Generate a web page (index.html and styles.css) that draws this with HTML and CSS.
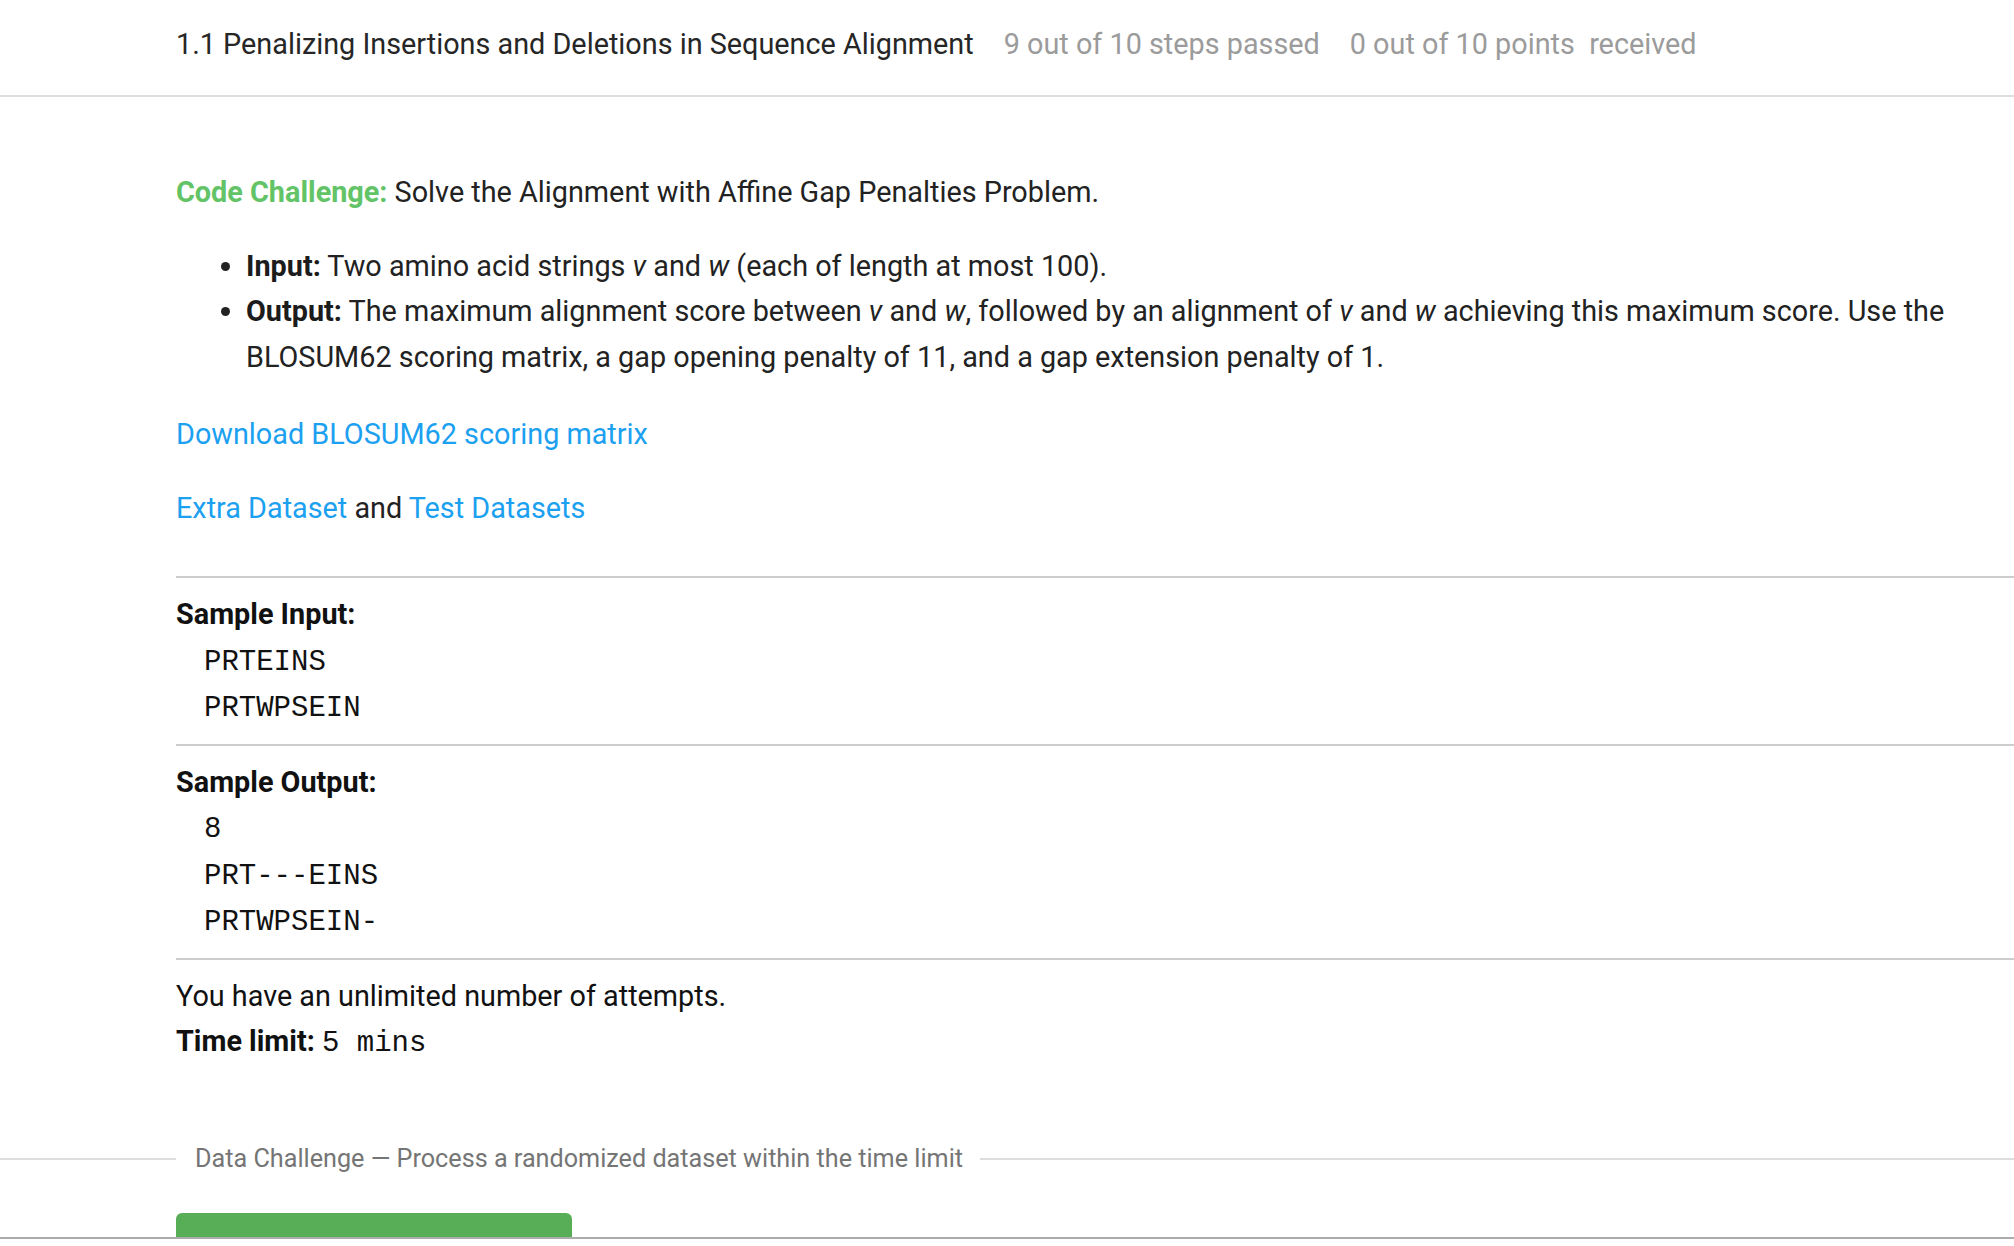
FILE: index.html
```html
<!DOCTYPE html>
<html lang="en">
<head>
<meta charset="utf-8">
<title>1.1 Penalizing Insertions and Deletions in Sequence Alignment</title>
<link rel="stylesheet" href="styles.css">
</head>
<body>
<header class="topbar">
  <span class="lesson-title">1.1 Penalizing Insertions and Deletions in Sequence Alignment</span>
  <span class="stat">9 out of 10 steps passed</span>
  <span class="stat">0 out of 10 points&nbsp; received</span>
</header>

<main class="step">
  <p class="lead"><strong class="cc">Code Challenge:</strong> Solve the Alignment with Affine Gap Penalties Problem.</p>
  <ul class="spec">
    <li><strong>Input:</strong> Two amino acid strings <em>v</em> and <em>w</em> (each of length at most 100).</li>
    <li><strong>Output:</strong> The maximum alignment score between <em>v</em> and <em>w</em>, followed by an alignment of <em>v</em> and <em>w</em> achieving this maximum score. Use the BLOSUM62 scoring matrix, a gap opening penalty of 11, and a gap extension penalty of 1.</li>
  </ul>
  <p class="link-line"><a href="#" class="link">Download BLOSUM62 scoring matrix</a></p>
  <p class="link-line last"><a href="#" class="link">Extra Dataset</a> and <a href="#" class="link">Test Datasets</a></p>

  <div class="samples">
    <section class="sample">
      <div class="sample-title">Sample Input:</div>
      <pre class="code">PRTEINS
PRTWPSEIN</pre>
    </section>
    <section class="sample">
      <div class="sample-title">Sample Output:</div>
      <pre class="code">8
PRT---EINS
PRTWPSEIN-</pre>
    </section>
    <section class="limits">
      <p>You have an unlimited number of attempts.</p>
      <p><strong>Time limit:</strong> <code class="mono">5 mins</code></p>
    </section>
  </div>
</main>

<div class="divider"><span class="divider-text">Data Challenge — Process a randomized dataset within the time limit</span></div>

<div class="actions">
  <button class="btn" type="button">Download dataset</button>
</div>

<div class="bottom-bar"></div>
</body>
</html>
```

FILE: styles.css
```css
html, body {
  margin: 0;
  padding: 0;
  background: #ffffff;
}

body {
  font-family: Roboto, "Liberation Sans", sans-serif;
  font-size: 28.8px;
  line-height: 45.5px;
  color: #222222;
  overflow: hidden;
}

.topbar {
  display: flex;
  align-items: baseline;
  gap: 30px;
  height: 74px;
  padding: 21px 0 0 176px;
  border-bottom: 2px solid #dedede;
  line-height: 46px;
  white-space: nowrap;
}

.lesson-title {
  color: #262626;
}

.stat {
  color: #9b9b9b;
}

.step {
  padding: 73px 0 0 176px;
}

.step p {
  margin: 0 0 28px;
}

.lead {
  color: #222222;
}

.cc {
  color: #62c466;
  font-weight: 700;
}

strong {
  font-weight: 700;
}

.spec {
  margin: 0 0 32px;
  padding-left: 70px;
}

.spec strong {
  color: #1c1c1c;
}

.link {
  color: #1ca0f0;
  text-decoration: none;
}

.step p.last {
  margin-bottom: 0;
}

.samples {
  margin-top: 45px;
}

.sample {
  border-top: 2px solid #cdcdcd;
  padding: 14px 0 11px;
}

.sample-title {
  font-weight: 700;
  color: #111111;
}

.code {
  margin: 0;
  padding: 2px 0 0 28px;
  font-family: "Liberation Mono", "DejaVu Sans Mono", monospace;
  font-size: 29px;
  line-height: 46.5px;
  color: #111111;
}

.limits {
  border-top: 2px solid #cdcdcd;
  padding-top: 14px;
}

.step .limits p {
  margin: 0;
  color: #111111;
}

.mono {
  font-family: "Liberation Mono", "DejaVu Sans Mono", monospace;
  font-size: 29px;
}

.divider {
  display: flex;
  align-items: center;
  margin-top: 74px;
  height: 36px;
}

.divider::before,
.divider::after {
  content: "";
  height: 2px;
  background: #dddddd;
}

.divider::before {
  width: 176px;
  flex: none;
}

.divider::after {
  flex: 1;
}

.divider-text {
  padding: 0 17px 0 19px;
  font-size: 25.2px;
  line-height: 36px;
  color: #757575;
  white-space: nowrap;
}

.actions {
  margin-top: 36px;
  padding-left: 176px;
}

.btn {
  width: 396px;
  height: 70px;
  padding: 24px 0 0;
  border: none;
  border-radius: 6px;
  background: #57ae57;
  color: #ffffff;
  font-family: Roboto, "Liberation Sans", sans-serif;
  font-size: 24px;
  line-height: 36px;
  text-align: center;
  vertical-align: top;
}

.bottom-bar {
  position: fixed;
  left: 0;
  right: 0;
  bottom: 0;
  height: 7px;
  border-top: 2px solid #acacac;
  background: #ffffff;
}
```
